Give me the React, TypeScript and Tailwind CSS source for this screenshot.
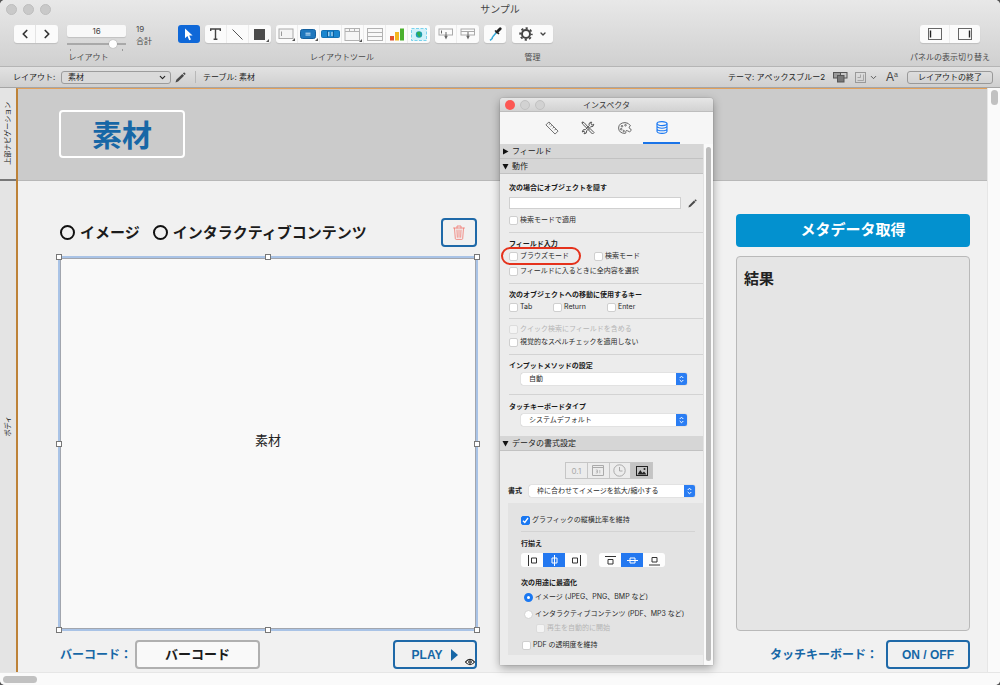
import React from "react";
import { ChevronDown, ChevronLeft, ChevronRight } from "lucide-react";

const UI = "font-['Inter','Noto_Sans_CJK_JP',sans-serif]";
const DOC = "font-['Liberation_Sans','Noto_Sans_CJK_JP',sans-serif]";

function Tool({ label, children, last }: { label: string; children: React.ReactNode; last?: boolean }) {
  return (
    <button
      aria-label={label}
      className={`flex h-[18px] w-[22px] items-center justify-center ${last ? "" : "border-r border-[#ececec]"}`}
    >
      {children}
    </button>
  );
}

function Group({ children }: { children: React.ReactNode }) {
  return <div className="flex overflow-hidden rounded-[3px] bg-[#fbfbfb] shadow-[0_1px_1px_rgba(0,0,0,0.12)]">{children}</div>;
}

function Pencil({ size = 11 }: { size?: number }) {
  return (
    <svg width={size} height={size} viewBox="0 0 11 11" fill="#4a4a4a">
      <path d="M0.5 10.5 L1.3 7.8 L7.3 1.9 L9.1 3.7 L3.1 9.6 Z" />
      <path d="M7.9 1.4 L8.6 0.7 Q9.2 0.2 9.8 0.8 L10.2 1.2 Q10.8 1.8 10.3 2.4 L9.6 3.1 Z" />
    </svg>
  );
}

function Toolbar() {
  return (
    <div className="flex h-12 items-start pr-[10px] pl-[14px] text-[8px] leading-3 text-[#4a4a4a]">
      <div className="mt-[7px]">
        <Group>
          <button aria-label="前へ" className="flex h-[18px] w-[22px] items-center justify-center border-r border-[#e4e4e4]">
            <ChevronLeft size={14} strokeWidth={3} color="#333" />
          </button>
          <button aria-label="次へ" className="flex h-[18px] w-[22px] items-center justify-center">
            <ChevronRight size={14} strokeWidth={3} color="#333" />
          </button>
        </Group>
      </div>
      <div className="mt-[7px] ml-[9px] flex w-[59px] flex-col items-center">
        <input
          aria-label="レイアウト番号"
          defaultValue="16"
          className="h-3 w-full rounded-[2px] bg-[#f8f8f8] text-center text-[8px] text-[#444] shadow-[0_1px_1px_rgba(0,0,0,0.12)]"
        />
        <input
          type="range"
          aria-label="レイアウト"
          min={1}
          max={19}
          defaultValue={16}
          className="mt-[2px] h-[10px] w-full appearance-none bg-transparent [&::-webkit-slider-runnable-track]:h-[2px] [&::-webkit-slider-runnable-track]:bg-[#a9a9a9] [&::-webkit-slider-thumb]:-mt-[3px] [&::-webkit-slider-thumb]:h-2 [&::-webkit-slider-thumb]:w-2 [&::-webkit-slider-thumb]:appearance-none [&::-webkit-slider-thumb]:rounded-full [&::-webkit-slider-thumb]:bg-white [&::-webkit-slider-thumb]:shadow-[0_0_1px_#777]"
        />
        <div className="flex h-[2px] w-full justify-between px-[3px]">
          <span className="w-px bg-[#999]" />
          <span className="w-px bg-[#999]" />
        </div>
        <span className="mr-4">レイアウト</span>
      </div>
      <div className="mt-[5px] ml-[10px] w-[42px] leading-3">
        19
        <br />
        合計
      </div>
      <div className="mt-[7px] flex flex-col items-center">
        <div className="flex gap-[5px]">
          <button aria-label="選択" className="flex h-[18px] w-[22px] items-center justify-center rounded-[3px] bg-[#0f68d8]">
            <svg width="10" height="13" viewBox="0 0 10 13">
              <path d="M1 0.5 V10.3 L3.4 8.1 L5.2 12.3 L7 11.5 L5.2 7.5 H8.6 Z" fill="#fff" />
            </svg>
          </button>
          <Group>
            <Tool label="テキスト">
              <svg width="11" height="12" viewBox="0 0 11 12" fill="none" stroke="#444" strokeWidth="1.4">
                <path d="M0.7 3 V1 H10.3 V3 M5.5 1 V11 M3.6 11.2 H7.4" />
              </svg>
            </Tool>
            <Tool label="線">
              <svg width="11" height="11" viewBox="0 0 11 11" stroke="#555" strokeWidth="1">
                <path d="M0.5 0.5 L10.5 10.5" />
              </svg>
            </Tool>
            <Tool label="図形" last>
              <svg width="17" height="15" viewBox="0 0 17 15">
                <rect x="2" y="2" width="11" height="11" fill="#4c4c4c" />
                <path d="M17 12 V15 H14 Z" fill="#555" />
              </svg>
            </Tool>
          </Group>
          <Group>
            <Tool label="フィールド">
              <svg width="17" height="14" viewBox="0 0 17 14" fill="none" stroke="#aaa">
                <rect x="1" y="2" width="14" height="9.5" fill="#f4f4f4" />
                <path d="M3.5 4.5 V9" stroke="#999" />
                <path d="M17 11 V14 H14 Z" fill="#555" stroke="none" />
              </svg>
            </Tool>
            <Tool label="ボタン">
              <svg width="18" height="14" viewBox="0 0 18 14">
                <rect x="0.5" y="2.5" width="15" height="9" rx="2" fill="#1f77bd" stroke="#135f9e" />
                <path d="M5.5 6.2 H10.5 M5.5 8 H10.5" stroke="#cfe6f8" />
                <path d="M18 11 V14 H15 Z" fill="#555" />
              </svg>
            </Tool>
            <Tool label="ボタンバー">
              <svg width="19" height="8" viewBox="0 0 19 8">
                <rect x="0.5" y="0.5" width="18" height="7" rx="1" fill="#1a86cf" stroke="#1571b4" />
                <path d="M6.5 1 V7 M12.5 1 V7" stroke="#0e5c97" />
                <path d="M7.8 2 V6 M11 2 V6" stroke="#d9eefc" />
              </svg>
            </Tool>
            <Tool label="タブ">
              <svg width="18" height="15" viewBox="0 0 18 15" fill="#f6f6f6" stroke="#b2b2b2">
                <rect x="1" y="1.5" width="14.5" height="12" />
                <path d="M1 4.5 H15.5 M5.5 1.5 V4.5 M10.5 1.5 V4.5" />
                <path d="M18 12 V15 H15 Z" fill="#555" stroke="none" />
              </svg>
            </Tool>
            <Tool label="ポータル">
              <svg width="16" height="13" viewBox="0 0 16 13" fill="#f8f8f8" stroke="#b2b2b2">
                <rect x="0.5" y="0.5" width="15" height="12" />
                <path d="M0.5 4.5 H15.5 M0.5 8.5 H15.5" />
              </svg>
            </Tool>
            <Tool label="グラフ">
              <svg width="14" height="13" viewBox="0 0 14 13">
                <rect x="0" y="8" width="4" height="4.5" fill="#e2502c" />
                <rect x="5" y="4" width="4" height="8.5" fill="#f3b61f" />
                <rect x="10" y="0.5" width="4" height="12" fill="#4bb02d" />
              </svg>
            </Tool>
            <Tool label="Web ビューア" last>
              <svg width="16" height="13" viewBox="0 0 16 13">
                <rect x="0.5" y="0.5" width="15" height="12" fill="#d2f1fa" stroke="#7ad2ec" strokeDasharray="3 1.5" />
                <circle cx="8" cy="6.5" r="3.2" fill="#1d9fb0" />
                <path d="M6 4.5 Q8 3 9.5 4.2 Q8 6 9.8 8.5 Q7 9.5 7 7 Q5.5 6 6 4.5" fill="#2fae4e" />
              </svg>
            </Tool>
          </Group>
          <Group>
            <Tool label="フィールドを配置">
              <svg width="16" height="12" viewBox="0 0 16 12" fill="none" stroke="#aaa">
                <rect x="1" y="1" width="13.5" height="6" />
                <path d="M3.5 2.5 V5.5" stroke="#666" />
                <path d="M8 4 V9" stroke="#666" />
                <path d="M6.2 7.8 H9.8 L8 11.5 Z" fill="#666" stroke="none" />
              </svg>
            </Tool>
            <Tool label="パートを配置" last>
              <svg width="16" height="12" viewBox="0 0 16 12" fill="none" stroke="#aaa">
                <rect x="1" y="1" width="13.5" height="6" />
                <path d="M1 3.5 H14.5" />
                <path d="M8 4 V9" stroke="#666" />
                <path d="M6.2 7.8 H9.8 L8 11.5 Z" fill="#666" stroke="none" />
              </svg>
            </Tool>
          </Group>
          <Group>
            <Tool label="書式コピー" last>
              <svg width="13" height="14" viewBox="0 0 13 14" fill="none">
                <path d="M8 4.8 L4 9.5 Q3 10.5 3.2 11.5 L1 13.3" stroke="#37a9d8" strokeWidth="1.5" />
                <path d="M6 3.5 L10 7" stroke="#222" strokeWidth="1.6" />
                <path d="M8 5 L11.2 1.8" stroke="#222" strokeWidth="2.8" strokeLinecap="round" />
              </svg>
            </Tool>
          </Group>
        </div>
        <span className="mt-2">レイアウトツール</span>
      </div>
      <div className="mt-[7px] ml-[6px] flex flex-col items-center">
        <Group>
          <button aria-label="管理" className="flex h-[18px] w-[41px] items-center justify-center gap-[6px]">
            <svg width="14" height="14" viewBox="0 0 14 14" fill="none" stroke="#444">
              <circle cx="7" cy="7" r="4" strokeWidth="2" />
              <circle cx="7" cy="7" r="5.8" strokeWidth="1.8" strokeDasharray="2.2 2.355" strokeDashoffset="1.1" />
            </svg>
            <ChevronDown size={8} strokeWidth={4} color="#444" />
          </button>
        </Group>
        <span className="mt-2">管理</span>
      </div>
      <div className="mt-[7px] ml-auto flex flex-col items-center">
        <Group>
          <button aria-label="左パネル" className="flex h-[18px] w-[30px] items-center justify-center border-r border-[#ececec]">
            <svg width="14" height="12" viewBox="0 0 14 12" fill="none" stroke="#666">
              <rect x="0.5" y="0.5" width="13" height="11" />
              <path d="M2.5 2.5 V9.5" stroke="#222" strokeWidth="1.4" />
            </svg>
          </button>
          <button aria-label="右パネル" className="flex h-[18px] w-[30px] items-center justify-center">
            <svg width="14" height="12" viewBox="0 0 14 12" fill="none" stroke="#666">
              <rect x="0.5" y="0.5" width="13" height="11" />
              <path d="M11.5 2.5 V9.5" stroke="#222" strokeWidth="1.4" />
            </svg>
          </button>
        </Group>
        <span className="mt-2">パネルの表示切り替え</span>
      </div>
    </div>
  );
}

function LayoutBar() {
  return (
    <div className="flex h-[21px] items-center border-b border-[#a5a5a5] bg-[linear-gradient(#e2e2e2,#cfcfcf)] pr-[7px] pl-[13px] text-[8px] leading-3 text-[#222]">
      <label htmlFor="layout" className="w-12">
        レイアウト:
      </label>
      <div className="grid w-[110px] items-center">
        <select
          id="layout"
          className="col-start-1 row-start-1 h-[13px] appearance-none rounded-[3px] border border-[#9c9c9c] bg-[#dadada] pl-[6px] text-[8px] leading-[11px]"
        >
          <option>素材</option>
        </select>
        <ChevronDown className="pointer-events-none col-start-1 row-start-1 mr-1 justify-self-end" size={9} strokeWidth={3} />
      </div>
      <button aria-label="レイアウトを編集" className="ml-[4px]">
        <Pencil />
      </button>
      <div className="mr-[7px] ml-[9px] h-3 w-px bg-[#b8b8b8]" />
      <span>テーブル: 素材</span>
      <span className="ml-auto">テーマ: アペックスブルー2</span>
      <svg className="ml-2" width="15" height="11" viewBox="0 0 15 11" stroke="#555">
        <rect x="0.5" y="0.5" width="7" height="5.5" fill="#9a9a9a" />
        <rect x="7.5" y="0.5" width="6.5" height="5.5" fill="#c8c8c8" />
        <rect x="4.5" y="3.5" width="6.5" height="6.5" fill="#777" />
      </svg>
      <svg className="ml-[7px]" width="11" height="11" viewBox="0 0 11 11" fill="none" stroke="#999">
        <rect x="0.5" y="0.5" width="10" height="10" />
        <path d="M5.5 2.5 V5.5 H2.5 M8.5 2.5 V8.5 H2.5" strokeWidth="0.8" />
      </svg>
      <ChevronDown className="ml-[3px]" size={9} strokeWidth={2.5} color="#555" />
      <span className="ml-2 flex items-start font-['Liberation_Sans'] text-[12px] text-[#444]">
        A<sup className="top-0 text-[7px] leading-2">a</sup>
      </span>
      <button className="ml-[9px] h-[13px] w-[86px] rounded-[3px] border border-[#999] text-[8px] leading-[11px]">レイアウトの終了</button>
    </div>
  );
}

const HANDLES = [
  "left-0 top-0",
  "left-1/2 top-0",
  "left-full top-0",
  "left-0 top-1/2",
  "left-full top-1/2",
  "left-0 top-full",
  "left-1/2 top-full",
  "left-full top-full",
];

function BigRadio({ label }: { label: string }) {
  return (
    <label className="flex items-center gap-[5px]">
      <input type="radio" name="kind" className="size-[15px] appearance-none rounded-full border-2 border-[#111]" />
      {label}
    </label>
  );
}

function Canvas() {
  return (
    <div className={`flex min-h-0 flex-1 ${DOC}`}>
      <div className="flex w-4 flex-col bg-[#e4e4e4] text-[7px] text-[#222]">
        <div className="flex h-[93px] items-center justify-center border-b-2 border-[#777]">
          <span className="-rotate-90 whitespace-nowrap">上部ナビゲーション</span>
        </div>
        <div className="flex flex-1 items-center justify-center">
          <span className="-rotate-90 whitespace-nowrap">ボディ</span>
        </div>
      </div>
      <div className="flex flex-1 flex-col border-t border-l-2 border-t-[#e2a05a] border-l-[#bd8238]">
        <div className="h-[92px] border-b border-[#b8b8b8] bg-[#cbcbcb] pt-[21px] pl-[41px]">
          <div className="flex h-[48px] w-[126px] items-center justify-center rounded-[4px] border-2 border-white pt-[3px] text-[30px] font-bold text-[#1767a6]">
            素材
          </div>
        </div>
        <div className="grid flex-1 grid-cols-[420fr_258fr_234fr] grid-rows-[33px_1fr_29px] gap-y-[9px] bg-[#f1f1f1] pt-[33px] pr-[17px] pb-[3px] pl-[40px]">
          <div className="flex items-end pl-[2px] text-[15px] leading-[29px] font-bold text-[#1c1c1c]">
            <div className="flex gap-[13px]">
              <BigRadio label="イメージ" />
              <BigRadio label="インタラクティブコンテンツ" />
            </div>
            <button aria-label="削除" className="mr-px ml-auto flex h-[29px] w-9 items-center justify-center rounded-[4px] border-2 border-[#1f69a8]">
              <svg width="12" height="15" viewBox="0 0 12 15" fill="none" stroke="#f0827a" strokeLinecap="round" strokeWidth="0.9">
                <path d="M0.5 3 H11.5 M4 3 V1 H8 V3 M1.5 3.2 L2.3 13.5 Q2.4 14.4 3.2 14.4 H8.8 Q9.6 14.4 9.7 13.5 L10.5 3.2 M4 5 L4.3 12.3 M6 5 V12.3 M8 5 L7.7 12.3" />
              </svg>
            </button>
          </div>
          <button className="col-start-3 rounded-[4px] bg-[#0391cf] text-[15px] font-bold text-white">メタデータ取得</button>

          <div className="relative col-start-1 border border-[#a9c3e6] bg-[#f9f9f9]">
            <div className="h-full border border-[#a9c3e6]">
              <div className="flex h-full items-center justify-center border border-[#a2a6ae] pb-[6px] text-[13px] text-[#222]">素材</div>
            </div>
            {HANDLES.map((at) => (
              <span key={at} className={`absolute size-[6px] -translate-1/2 border border-[#777] bg-white ${at}`} />
            ))}
          </div>
          <div className="col-start-3 rounded-[4px] border border-[#b9b9b9] bg-[#e5e5e5] px-[7px] py-[11px] text-[15px] font-bold text-[#222]">結果</div>

          <div className="col-start-1 flex items-center pl-[2px] text-[12px] font-bold text-[#1767a6]">
            <span className="w-[75px] whitespace-nowrap">バーコード：</span>
            <button className="h-[29px] w-[125px] rounded-[4px] border-2 border-[#b0b0b0] bg-[#f9f9f9] text-[13px] text-[#1c1c1c]">バーコード</button>
            <button className="relative mr-px ml-auto flex h-[29px] w-[84px] items-center justify-center gap-[9px] rounded-[4px] border-2 border-[#1f69a8]">
              PLAY
              <svg width="7" height="12" viewBox="0 0 7 12" fill="#1767a6">
                <path d="M0 0 L7 6 L0 12 Z" />
              </svg>
              <svg className="absolute right-0 bottom-px" width="10" height="8" viewBox="0 0 11 8">
                <path d="M0.5 4 Q5.5 -2 10.5 4 Q5.5 10 0.5 4 Z" fill="#fff" stroke="#111" strokeWidth="1.2" />
                <circle cx="5.5" cy="4" r="2" fill="#111" />
                <circle cx="5.5" cy="4" r="0.7" fill="#fff" />
              </svg>
            </button>
          </div>
          <div className="col-start-3 flex items-center justify-end text-[12px] font-bold text-[#1767a6]">
            <span className="mr-2 whitespace-nowrap">タッチキーボード：</span>
            <button className="h-[29px] w-[84px] rounded-[4px] border-2 border-[#1f69a8]">ON / OFF</button>
          </div>
        </div>
      </div>
      <div className="w-[13px] border-l border-[#e6e6e6] bg-[#fafafa] pt-[2px] pl-[3px]">
        <div className="h-[15px] w-[7px] rounded-full bg-[#c1c1c1]" />
      </div>
    </div>
  );
}

function Check({
  label,
  disabled,
  checked,
  radio,
  marked,
}: {
  label: string;
  disabled?: boolean;
  checked?: boolean;
  radio?: boolean;
  marked?: boolean;
}) {
  return (
    <label className={`relative flex h-3 items-center gap-[2px] whitespace-nowrap ${disabled ? "text-[#b5b5b5]" : ""}`}>
      <input
        type={radio ? "radio" : "checkbox"}
        name={radio ? "optimize" : undefined}
        disabled={disabled}
        defaultChecked={checked}
        className={
          radio
            ? "size-[9px] appearance-none rounded-full border border-[#d2d2d2] bg-white checked:border-[3px] checked:border-[#1a78f2]"
            : "size-[9px] appearance-none rounded-[2px] border border-[#cfcfcf] bg-white checked:border-[#1a78f2] checked:bg-[#1a78f2] disabled:border-[#dcdcdc] disabled:bg-[#f4f4f4]"
        }
      />
      {checked && !radio && (
        <svg className="absolute left-px" width="7" height="7" viewBox="0 0 7 7" fill="none" stroke="#fff" strokeWidth="1.3">
          <path d="M1 3.7 L2.8 5.5 L6 1" />
        </svg>
      )}
      {label}
      {marked && <span className="absolute -top-[3px] -left-2 h-[18px] w-20 rounded-full border-2 border-[#e5321c]" />}
    </label>
  );
}

function Popup({ label, value }: { label: string; value: string }) {
  return (
    <div className="grid h-3 w-[166px] items-center">
      <select
        aria-label={label}
        className="col-start-1 row-start-1 h-3 appearance-none rounded-[2px] bg-white pl-2 text-[7px] leading-3 shadow-[0_0_1px_rgba(0,0,0,0.4)]"
      >
        <option>{value}</option>
      </select>
      <span className="pointer-events-none col-start-1 row-start-1 flex h-3 w-[11px] items-center justify-center justify-self-end rounded-r-[2px] bg-[#2a7df3]">
        <svg width="5" height="8" viewBox="0 0 5 8" fill="none" stroke="#fff">
          <path d="M0.7 3 L2.5 1.2 L4.3 3 M0.7 5 L2.5 6.8 L4.3 5" />
        </svg>
      </span>
    </div>
  );
}

function SectionHead({ title, open }: { title: string; open?: boolean }) {
  return (
    <button className="flex h-[15px] w-full items-center gap-[3px] border-b border-[#c2c2c2] bg-[#d6d6d6] pl-[2px] text-[8px] leading-3 text-[#222]">
      <svg width="7" height="7" viewBox="0 0 7 7" fill="#111">
        {open ? <path d="M0.5 1 H6.5 L3.5 6.5 Z" /> : <path d="M1 0.5 V6.5 L6.5 3.5 Z" />}
      </svg>
      {title}
    </button>
  );
}

function Heading({ children }: { children: React.ReactNode }) {
  return <h3 className="h-3 font-bold whitespace-nowrap text-[#1a1a1a]">{children}</h3>;
}

function Align({ kind, active }: { kind: number; active?: boolean }) {
  const paths = [
    "M1.5 0 V11 M4.5 3 H9.5 V8 H4.5 Z",
    "M5.5 0 V11 M3 3 H8 V8 H3 Z",
    "M9.5 0 V11 M1.5 3 H6.5 V8 H1.5 Z",
    "M0 1.5 H11 M3 4.5 H8 V9 H3 Z",
    "M0 5.5 H11 M3 3 H8 V8 H3 Z",
    "M0 10 H11 M3 2.5 H8 V7 H3 Z",
  ];
  const names = ["左揃え", "左右中央", "右揃え", "上揃え", "上下中央", "下揃え"];
  return (
    <button aria-label={names[kind]} className={`flex h-[14px] w-[22px] items-center justify-center ${active ? "bg-[#2378f0]" : "bg-[#fdfdfd]"}`}>
      <svg width="11" height="11" viewBox="0 0 11 11" fill="none" stroke={active ? "#fff" : "#333"}>
        <path d={paths[kind]} />
      </svg>
    </button>
  );
}

function Inspector() {
  const rule = "border-b border-[#d3d3d3]";
  return (
    <aside className={`absolute top-[98px] left-1/2 flex w-[213px] flex-col rounded-t-[3px] bg-[#ececec] shadow-[0_3px_10px_rgba(0,0,0,0.35),0_0_1px_rgba(0,0,0,0.5)] ${UI}`}>
      <header className="grid h-[14px] grid-cols-3 items-center rounded-t-[3px] border-b border-[#bdbdbd] bg-[linear-gradient(#e6e6e6,#d2d2d2)] px-[5px] text-[8px] leading-3 text-[#333]">
        <div className="flex gap-[5px]">
          <span className="size-[10px] rounded-full bg-[#fc5753]" />
          <span className="size-[10px] rounded-full border border-[#c2c2c2] bg-[#d2d2d2]" />
          <span className="size-[10px] rounded-full border border-[#c2c2c2] bg-[#d2d2d2]" />
        </div>
        <h2 className="text-center">インスペクタ</h2>
      </header>
      <nav className="flex h-8 justify-center bg-[#f6f6f6]">
        <button aria-label="位置" className="flex w-[37px] items-center justify-center">
          <svg width="14" height="14" viewBox="0 0 15 15" fill="none" stroke="#666">
            <path d="M1 4.2 L4.2 1 L14 10.8 L10.8 14 Z M5.5 2.6 L4.2 3.9 M7.5 4.6 L6.2 5.9 M9.5 6.6 L8.2 7.9 M11.5 8.6 L10.2 9.9" />
          </svg>
        </button>
        <button aria-label="スタイル" className="flex w-[36px] items-center justify-center">
          <svg width="14" height="14" viewBox="0 0 14 14" fill="none" stroke="#555">
            <path d="M1 1 L3 1.5 L7.8 6.8 M9 7.5 L13 11.5 L11.5 13 L7.5 9 Z M1 1 L1.5 3 L6.5 7.8" />
            <path d="M12.8 3.2 L11 4.2 L9.8 3 L10.8 1.2 Q8.5 0.8 8 3 Q7.9 4.2 8.3 4.6 L4.5 8.5 Q1.5 8 1.2 11 L3 10.2 L3.9 11.2 L3 12.8 Q6 13 5.7 9.8 L9.5 5.8 Q12.8 6.2 12.8 3.2" />
          </svg>
        </button>
        <button aria-label="外観" className="flex w-[37px] items-center justify-center">
          <svg width="14" height="12" viewBox="0 0 14 12" fill="none" stroke="#666">
            <path d="M12.5 3.8 Q10.5 0.6 7 0.6 Q0.7 0.9 0.6 6 Q0.8 11.2 7 11.4 Q8.4 11.2 7.8 9.5 Q8 7.8 9.5 8.8 Q12 11 13.2 8.4 Q13.4 7 11.5 6.4 Q10 5.2 12.5 3.8 Z" />
            <circle cx="4" cy="4.2" r="0.8" />
            <circle cx="7.5" cy="3.2" r="0.8" />
            <circle cx="3.2" cy="7.2" r="0.8" />
            <circle cx="5.7" cy="9" r="0.7" />
          </svg>
        </button>
        <button aria-label="データ" className="flex w-[37px] items-center justify-center border-b-2 border-[#1a74e8]">
          <svg width="12" height="13" viewBox="0 0 12 13" fill="none" stroke="#1a78f2" strokeWidth="1.1">
            <ellipse cx="6" cy="2.6" rx="5" ry="2" />
            <path d="M1 2.6 V10.4 Q1.5 12.4 6 12.4 Q10.5 12.4 11 10.4 V2.6 M1 5.2 Q1.5 7.2 6 7.2 Q10.5 7.2 11 5.2 M1 7.8 Q1.5 9.8 6 9.8 Q10.5 9.8 11 7.8" />
          </svg>
        </button>
      </nav>
      <div className="flex">
        <div className="flex-1 pb-[10px] text-[7px] leading-3 text-[#2a2a2a]">
          <SectionHead title="フィールド" />
          <SectionHead title="動作" open />
          <div className="pb-[10px] pl-[9px]">
            <div className={`pt-2 pb-[6px] ${rule}`}>
              <Heading>次の場合にオブジェクトを隠す</Heading>
              <div className="mt-[3px] flex h-3 items-center gap-[7px]">
                <input aria-label="次の場合にオブジェクトを隠す" className="h-3 w-[172px] border border-[#d0d0d0] bg-white" />
                <button aria-label="式を編集">
                  <Pencil size={9} />
                </button>
              </div>
              <div className="mt-[5px]">
                <Check label="検索モードで適用" />
              </div>
            </div>
            <div className={`pt-[5px] pb-[6px] ${rule}`}>
              <Heading>フィールド入力</Heading>
              <div className="grid grid-cols-[85px_1fr]">
                <Check label="ブラウズモード" marked />
                <Check label="検索モード" />
              </div>
              <div className="mt-[3px]">
                <Check label="フィールドに入るときに全内容を選択" />
              </div>
            </div>
            <div className={`pt-[5px] pb-[5px] ${rule}`}>
              <Heading>次のオブジェクトへの移動に使用するキー</Heading>
              <div className="grid grid-cols-[44px_54px_1fr]">
                <Check label="Tab" />
                <Check label="Return" />
                <Check label="Enter" />
              </div>
            </div>
            <div className={`flex flex-col gap-px pt-1 pb-[6px] ${rule}`}>
              <Check label="クイック検索にフィールドを含める" disabled />
              <Check label="視覚的なスペルチェックを適用しない" />
            </div>
            <div className={`pt-[5px] pb-[9px] ${rule}`}>
              <Heading>インプットメソッドの設定</Heading>
              <div className="mt-px pl-3">
                <Popup label="インプットメソッドの設定" value="自動" />
              </div>
            </div>
            <div className="pt-[6px]">
              <Heading>タッチキーボードタイプ</Heading>
              <div className="mt-px pl-3">
                <Popup label="タッチキーボードタイプ" value="システムデフォルト" />
              </div>
            </div>
          </div>
          <SectionHead title="データの書式設定" open />
          <div className="pl-2">
            <div className="mt-[11px] ml-[57px] flex h-[17px] w-[88px] border border-[#c6c6c6] text-[#aaa]">
              <button className="flex-1 border-r border-[#c6c6c6] text-[8px]">0.1</button>
              <button aria-label="日付" className="flex flex-1 items-center justify-center border-r border-[#c6c6c6]">
                <svg width="12" height="11" viewBox="0 0 12 11" fill="none" stroke="#aaa">
                  <path d="M0.5 0.5 H11.5 V10.5 H0.5 Z M0.5 2.5 H11.5" />
                  <path d="M3.8 5 H5.5 V8 H3.8 M4.2 6.5 H5.5 M7.8 5 V8.4" strokeWidth="0.7" />
                </svg>
              </button>
              <button aria-label="時刻" className="flex flex-1 items-center justify-center border-r border-[#c6c6c6]">
                <svg width="13" height="13" viewBox="0 0 13 13" fill="none" stroke="#aaa">
                  <circle cx="6.5" cy="6.5" r="5.7" />
                  <path d="M6.5 3 V7 H9.5" />
                </svg>
              </button>
              <button aria-label="イメージ" className="flex flex-1 items-center justify-center bg-[#c4c4c4]">
                <svg width="12" height="10" viewBox="0 0 12 10" fill="none" stroke="#222">
                  <rect x="0.5" y="0.5" width="11" height="9" />
                  <path d="M1.5 8.5 L4.3 4 L6.3 7 L8 5.5 L10.5 8.5 Z" fill="#222" stroke="none" />
                  <circle cx="8.5" cy="3" r="1" fill="#222" stroke="none" />
                </svg>
              </button>
            </div>
            <div className="mt-[6px] flex">
              <div className="w-[21px]">
                <Heading>書式</Heading>
              </div>
              <Popup label="書式" value="枠に合わせてイメージを拡大/縮小する" />
            </div>
            <div className="mt-[6px] bg-[#e3e3e3] pt-[11px] pr-2 pb-1 pl-[13px]">
              <div className={`pb-[5px] ${rule}`}>
                <Check label="グラフィックの縦横比率を維持" checked />
              </div>
              <div className="pt-[6px]">
                <Heading>行揃え</Heading>
              </div>
              <div className="mt-[3px] flex gap-3">
                <div className="flex overflow-hidden rounded-[3px]">
                  <Align kind={0} />
                  <Align kind={1} active />
                  <Align kind={2} />
                </div>
                <div className="flex overflow-hidden rounded-[3px]">
                  <Align kind={3} />
                  <Align kind={4} active />
                  <Align kind={5} />
                </div>
              </div>
              <div className="mt-[10px]">
                <Heading>次の用途に最適化</Heading>
              </div>
              <div className="mt-[2px] pl-[3px]">
                <Check label="イメージ (JPEG、PNG、BMP など)" radio checked />
                <div className="mt-[5px]">
                  <Check label="インタラクティブコンテンツ (PDF、MP3 など)" radio />
                </div>
                <div className="mt-[2px] pl-3">
                  <Check label="再生を自動的に開始" disabled />
                </div>
              </div>
              <div className="mt-[5px] pl-px">
                <Check label="PDF の透明度を維持" />
              </div>
            </div>
          </div>
        </div>
        <div className="flex w-[10px] justify-center border-l border-[#e2e2e2] bg-[#fafafa] pt-[3px] pb-1">
          <div className="w-[5px] rounded-full bg-[#bdbdbd]" />
        </div>
      </div>
    </aside>
  );
}

export default function App() {
  return (
    <div className="h-screen bg-[#555]">
      <div className={`relative flex h-full flex-col overflow-hidden rounded-[5px] bg-[#fafafa] ${UI}`}>
        <div className="border-b border-[#b5b5b5] bg-[linear-gradient(#e8e8e8,#d0d0d0)]">
          <div className="grid h-[18px] grid-cols-3 items-center px-[6px]">
            <div className="flex gap-[6px]">
              <span className="size-[11px] rounded-full border border-[#bdbdbd] bg-[#c9c9c9]" />
              <span className="size-[11px] rounded-full border border-[#bdbdbd] bg-[#c9c9c9]" />
              <span className="size-[11px] rounded-full border border-[#bdbdbd] bg-[#c9c9c9]" />
            </div>
            <h1 className="text-center text-[10px] leading-4 text-[#444]">サンプル</h1>
          </div>
          <Toolbar />
        </div>
        <LayoutBar />
        <Canvas />
        <div className="h-[13px] border-t border-[#e6e6e6] bg-[#fafafa] pt-[3px] pl-[3px]">
          <div className="h-[7px] w-[34px] rounded-full bg-[#c1c1c1]" />
        </div>
        <Inspector />
      </div>
    </div>
  );
}
